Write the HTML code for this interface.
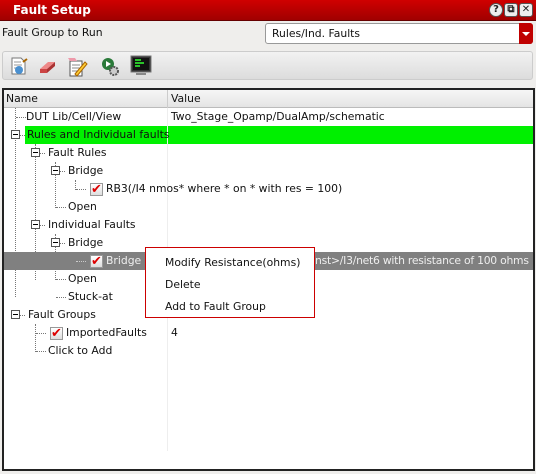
<!DOCTYPE html>
<html><head><meta charset="utf-8"><style>
*{margin:0;padding:0;box-sizing:border-box}
body{width:536px;height:474px;background:#efeeec;font-family:"DejaVu Sans","Liberation Sans",sans-serif;font-size:10.8px;color:#111;position:relative;overflow:hidden}
.a{position:absolute;white-space:nowrap}
#title{left:0;top:0;width:536px;height:21px;background:linear-gradient(#d00000,#a00000);border-bottom:1px solid #600}
#title span{position:absolute;left:13px;top:3px;color:#fff;font-weight:bold;font-size:12px}
.tb{top:3px;width:14px;height:14px;background:#eee;border:1px solid #555;border-radius:3px;font-size:10px;font-weight:bold;text-align:center;line-height:12px;color:#222}
#combo{left:265px;top:23px;width:268px;height:21px;border:1px solid #999;border-radius:3px;background:#fff}
#combo span{position:absolute;left:6px;top:3px}
#arrow{position:absolute;right:-1px;top:-1px;width:14px;height:21px;background:#c00000;border-radius:0 3px 3px 0}
#arrow:after{content:"";position:absolute;left:3px;top:9px;border:4px solid transparent;border-top:4px solid #fff}
#tool{left:2px;top:51px;width:531px;height:29px;border:1px solid #ccc;border-radius:3px;background:linear-gradient(#f2f2f2,#dcdcdc)}
#tree{left:2px;top:88px;width:533px;height:383px;border:2px solid #222;background:#fff}
#hdr{left:0;top:0;width:529px;height:18px;background:linear-gradient(#f6f6f6,#e4e4e4);border-bottom:1px solid #bbb}
.row{left:0;height:18px;width:529px}
.t{position:absolute;top:2px}
.v{left:167px}
.exp{width:9px;height:9px;border:1px solid #555;background:#fff}
.exp:after{content:"";position:absolute;left:1px;top:3px;width:5px;height:1px;background:#000}
.vl{border-left:1px dotted #777;width:0}
.hl{border-top:1px dotted #777;height:0}
.cb{width:13px;height:13px;border:1px solid #999;background:linear-gradient(#fff,#ddd);color:#d00;font-size:13px;line-height:11px;text-align:center;font-weight:bold}
#menu{left:145px;top:247px;width:170px;height:71px;border:1px solid #c00;background:#fff}
#menu div{position:absolute;left:19px}
</style></head><body>
<div id="title" class="a"><span>Fault Setup</span>
<div class="a tb" style="left:489px;border-radius:7px">?</div>
<div class="a tb" style="left:504px">&#10697;</div>
<div class="a tb" style="left:519px">✕</div></div>
<div class="a" style="left:2px;top:26px">Fault Group to Run</div>
<div id="combo" class="a"><span>Rules/Ind. Faults</span><div id="arrow"></div></div>
<div id="tool" class="a">
<svg class="a" style="left:6px;top:4px" width="20" height="20"><path d="M3 2h9l4 4v12H3z" fill="#fff" stroke="#777"/><path d="M5 6h7M5 9h8M5 12h5" stroke="#999"/><circle cx="10" cy="14" r="4" fill="#4a90d0"/><path d="M14 6l4-3" stroke="#a60" stroke-width="2"/></svg>
<svg class="a" style="left:34px;top:4px" width="20" height="20"><path d="M3 13l8-7h7l-8 7z" fill="#e88"/><path d="M3 13h7v4H3z" fill="#c44"/><path d="M10 13l8-7v4l-8 7z" fill="#a33"/></svg>
<svg class="a" style="left:63px;top:3px" width="22" height="22"><path d="M4 6h12v15H4z" fill="#fff" stroke="#555"/><path d="M6 10h8M6 13h8M6 16h6" stroke="#888"/><path d="M2 3h7l2 3H4z" fill="#e9a"/><path d="M9 19l10-12 2 2-10 12z" fill="#fc3" stroke="#a60"/></svg>
<svg class="a" style="left:97px;top:4px" width="22" height="22"><circle cx="8" cy="8" r="6" fill="#2a7a3a"/><path d="M6 5l5 3-5 3z" fill="#fff"/><circle cx="14" cy="15" r="4" fill="#ccc" stroke="#555" stroke-width="2" stroke-dasharray="2 1"/></svg>
<svg class="a" style="left:127px;top:3px" width="22" height="22"><rect x="1" y="1" width="20" height="16" fill="#333" stroke="#777"/><rect x="3" y="3" width="16" height="12" fill="#111"/><path d="M5 5h6M5 8h9M5 11h5" stroke="#3f3" stroke-width="1.5"/><path d="M6 19h10" stroke="#888" stroke-width="2"/></svg>
</div>
<div id="tree" class="a">
<div id="hdr" class="a"><span class="t" style="left:2px">Name</span><span class="a" style="left:163px;top:0;height:18px;border-left:1px solid #ccc"></span><span class="t" style="left:167px">Value</span></div>
<div class="a" style="left:163px;top:18px;height:343px;border-left:1px solid #eee"></div>
<div class="a vl" style="left:11px;top:18px;height:189px"></div>
<div class="a vl" style="left:31px;top:54px;height:136px"></div>
<div class="a vl" style="left:51px;top:72px;height:46px"></div>
<div class="a vl" style="left:51px;top:144px;height:46px"></div>
<div class="a vl" style="left:71px;top:90px;height:10px"></div>
<div class="a vl" style="left:71px;top:162px;height:10px"></div>
<div class="a vl" style="left:31px;top:234px;height:28px"></div>
<div class="a row" style="top:18px"><div class="a hl" style="left:12px;top:9px;width:10px"></div><span class="t" style="left:22px">DUT Lib/Cell/View</span><span class="t v">Two_Stage_Opamp/DualAmp/schematic</span></div>
<div class="a row" style="top:36px"><div class="a" style="left:21px;top:0;width:142px;height:18px;background:#00f000"></div><div class="a" style="left:164px;top:0;width:365px;height:18px;background:#00f000"></div><div class="a exp" style="left:7px;top:4px"></div><div class="a hl" style="left:16px;top:9px;width:5px"></div><span class="t" style="left:23px">Rules and Individual faults</span></div>
<div class="a row" style="top:54px"><div class="a exp" style="left:27px;top:4px"></div><div class="a hl" style="left:36px;top:9px;width:5px"></div><span class="t" style="left:44px">Fault Rules</span></div>
<div class="a row" style="top:72px"><div class="a exp" style="left:47px;top:4px"></div><div class="a hl" style="left:56px;top:9px;width:5px"></div><span class="t" style="left:64px">Bridge</span></div>
<div class="a row" style="top:90px"><div class="a hl" style="left:72px;top:9px;width:10px"></div><div class="a cb" style="left:86px;top:3px">✔</div><span class="t" style="left:102px">RB3(/I4 nmos* where * on * with res = 100)</span></div>
<div class="a row" style="top:108px"><div class="a hl" style="left:52px;top:9px;width:10px"></div><span class="t" style="left:64px">Open</span></div>
<div class="a row" style="top:126px"><div class="a exp" style="left:27px;top:4px"></div><div class="a hl" style="left:36px;top:9px;width:5px"></div><span class="t" style="left:44px">Individual Faults</span></div>
<div class="a row" style="top:144px"><div class="a exp" style="left:47px;top:4px"></div><div class="a hl" style="left:56px;top:9px;width:5px"></div><span class="t" style="left:64px">Bridge</span></div>
<div class="a row" style="top:162px;background:#808080;color:#eee"><div class="a hl" style="left:72px;top:9px;width:10px;border-color:#ccc"></div><div class="a cb" style="left:86px;top:3px">✔</div><span class="t" style="left:102px">Bridge</span><span class="t" style="left:311px;letter-spacing:-0.25px">nst&gt;/I3/net6 with resistance of 100 ohms</span></div>
<div class="a row" style="top:180px"><div class="a hl" style="left:52px;top:9px;width:10px"></div><span class="t" style="left:64px">Open</span></div>
<div class="a row" style="top:198px"><div class="a hl" style="left:52px;top:9px;width:10px"></div><span class="t" style="left:64px">Stuck-at</span></div>
<div class="a row" style="top:216px"><div class="a exp" style="left:7px;top:4px"></div><div class="a hl" style="left:16px;top:9px;width:5px"></div><span class="t" style="left:24px">Fault Groups</span></div>
<div class="a row" style="top:234px"><div class="a hl" style="left:32px;top:9px;width:10px"></div><div class="a cb" style="left:46px;top:3px">✔</div><span class="t" style="left:62px">ImportedFaults</span><span class="t v">4</span></div>
<div class="a row" style="top:252px"><div class="a hl" style="left:32px;top:9px;width:10px"></div><span class="t" style="left:44px">Click to Add</span></div>
</div>
<div id="menu" class="a"><div style="top:8px">Modify Resistance(ohms)</div><div style="top:30px">Delete</div><div style="top:52px">Add to Fault Group</div></div>
</body></html>
